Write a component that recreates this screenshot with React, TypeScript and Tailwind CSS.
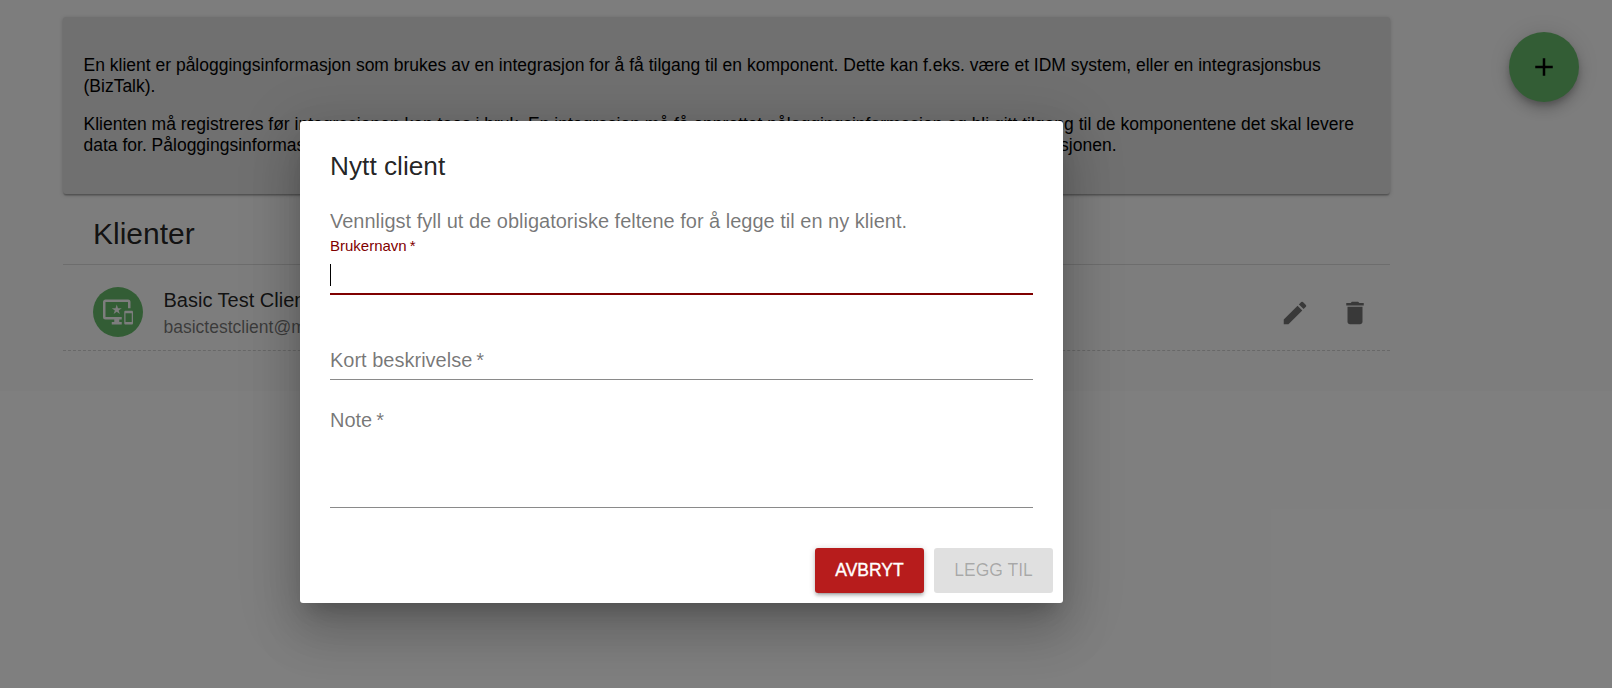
import React from "react";
import { MdAdd, MdDelete, MdEdit, MdImportantDevices } from "react-icons/md";

function InfoCard() {
  return (
    <section className="h-[177px] rounded-[3px] bg-[#e0e0e0] px-[20.5px] py-[38px] text-[17.5px] leading-[20.7px] text-black shadow-[0px_1px_4px_rgba(0,0,0,0.2),0px_1px_1px_rgba(0,0,0,0.14),0px_3px_1px_-1px_rgba(0,0,0,0.12)]">
      <p>
        En klient er påloggingsinformasjon som brukes av en integrasjon for å få tilgang til en komponent. Dette kan
        f.eks. være et IDM system, eller en integrasjonsbus
        <br />
        (BizTalk).
      </p>
      <p className="mt-[18px] whitespace-nowrap">
        Klienten må registreres før integrasjonen kan taes i bruk. En integrasjon må få opprettet påloggingsinformasjon
        og bli gitt tilgang til de komponentene det skal levere
        <span className="flex w-[1033px] justify-between">
          <span>data for. Påloggingsinformasjonen blir generert og må oppgis</span>
          <span>til den som skal sette opp integrasjonen.</span>
        </span>
      </p>
    </section>
  );
}

function ClientRow() {
  return (
    <div className="mt-[10px] flex h-[76px] items-center border-b border-dashed border-black/[0.16] pl-[30px] pr-[5px]">
      <div className="mb-[2px] flex size-[50px] items-center justify-center rounded-full bg-[#66bb6a] text-[#fafafa]">
        <MdImportantDevices size={30} />
      </div>
      <div className="ml-[20.5px] flex-1 pb-[2px]">
        <div className="text-[20px] leading-[30px] text-black/[0.87]">Basic Test Client</div>
        <div className="text-[17.5px] leading-[24px] text-black/[0.54]">basictestclient@mock.no</div>
      </div>
      <button className="flex size-[60px] items-center justify-center text-black/[0.54]" aria-label="Rediger">
        <MdEdit size={30} />
      </button>
      <button className="flex size-[60px] items-center justify-center text-black/[0.54]" aria-label="Slett">
        <MdDelete size={30} />
      </button>
    </div>
  );
}

function ClientDialog() {
  return (
    <div className="flex h-[482px] w-[763px] flex-col rounded-[3px] bg-white shadow-[0px_14px_19px_-9px_rgba(0,0,0,0.2),0px_30px_48px_4px_rgba(0,0,0,0.14),0px_11px_58px_10px_rgba(0,0,0,0.12)]">
      <h2 className="px-[30px] pt-[25px] text-[26.25px] leading-[40px] text-black/[0.87]">Nytt client</h2>
      <div className="flex flex-col px-[30px] pt-[20px]">
        <p className="text-[20px] leading-[30px] text-black/[0.54]">
          Vennligst fyll ut de obligatoriske feltene for å legge til en ny klient.
        </p>
        <div className="flex h-[59px] flex-col border-b-2 border-[#7f0000]">
          <label className="h-[20px] text-[15px] leading-[20px] text-[#7f0000]">Brukernavn&thinsp;*</label>
          <div className="mt-[8px] h-[22px] w-px bg-black" />
        </div>
        <div className="mt-[50px] h-[35px] border-b border-black/[0.46] text-[20px] leading-[30px] text-black/[0.54]">
          Kort beskrivelse&thinsp;*
        </div>
        <div className="mt-[25px] h-[103px] border-b border-black/[0.46] text-[20px] leading-[30px] text-black/[0.54]">
          Note&thinsp;*
        </div>
      </div>
      <div className="mt-auto flex justify-end gap-[10px] p-[10px] text-[17.5px] font-medium">
        <button className="h-[45px] w-[109px] rounded-[3px] bg-[#b71c1c] text-white shadow-[0px_1px_6px_rgba(0,0,0,0.2),0px_3px_3px_rgba(0,0,0,0.14),0px_4px_1px_-3px_rgba(0,0,0,0.12)] [-webkit-text-stroke:0.35px_white]">
          AVBRYT
        </button>
        <button className="h-[45px] w-[119px] rounded-[3px] bg-black/[0.12] text-black/[0.26]" disabled>
          LEGG TIL
        </button>
      </div>
    </div>
  );
}

export default function App() {
  return (
    <div className="relative h-[688px] w-full overflow-hidden bg-white font-['Liberation_Sans',Arial,sans-serif]">
      <main className="flex h-[391px] items-start justify-between bg-[#fafafa] pl-[63px] pr-[33px] pt-[17px]">
        <div className="w-[1327px]">
          <InfoCard />
          <div className="flex h-[71px] items-center border-b border-black/[0.12] pl-[30px] pt-[8px] text-[30px] text-black/[0.87]">
            Klienter
          </div>
          <ClientRow />
        </div>
        <button
          className="mt-[15px] flex size-[70px] items-center justify-center rounded-full bg-[#66bb6a] text-black shadow-[0px_4px_6px_-1px_rgba(0,0,0,0.2),0px_8px_13px_rgba(0,0,0,0.14),0px_1px_22px_rgba(0,0,0,0.12)]"
          aria-label="Legg til"
        >
          <MdAdd size={30} />
        </button>
      </main>
      <div className="absolute inset-0 bg-black/50 pl-[300px] pt-[121px]">
        <ClientDialog />
      </div>
    </div>
  );
}
